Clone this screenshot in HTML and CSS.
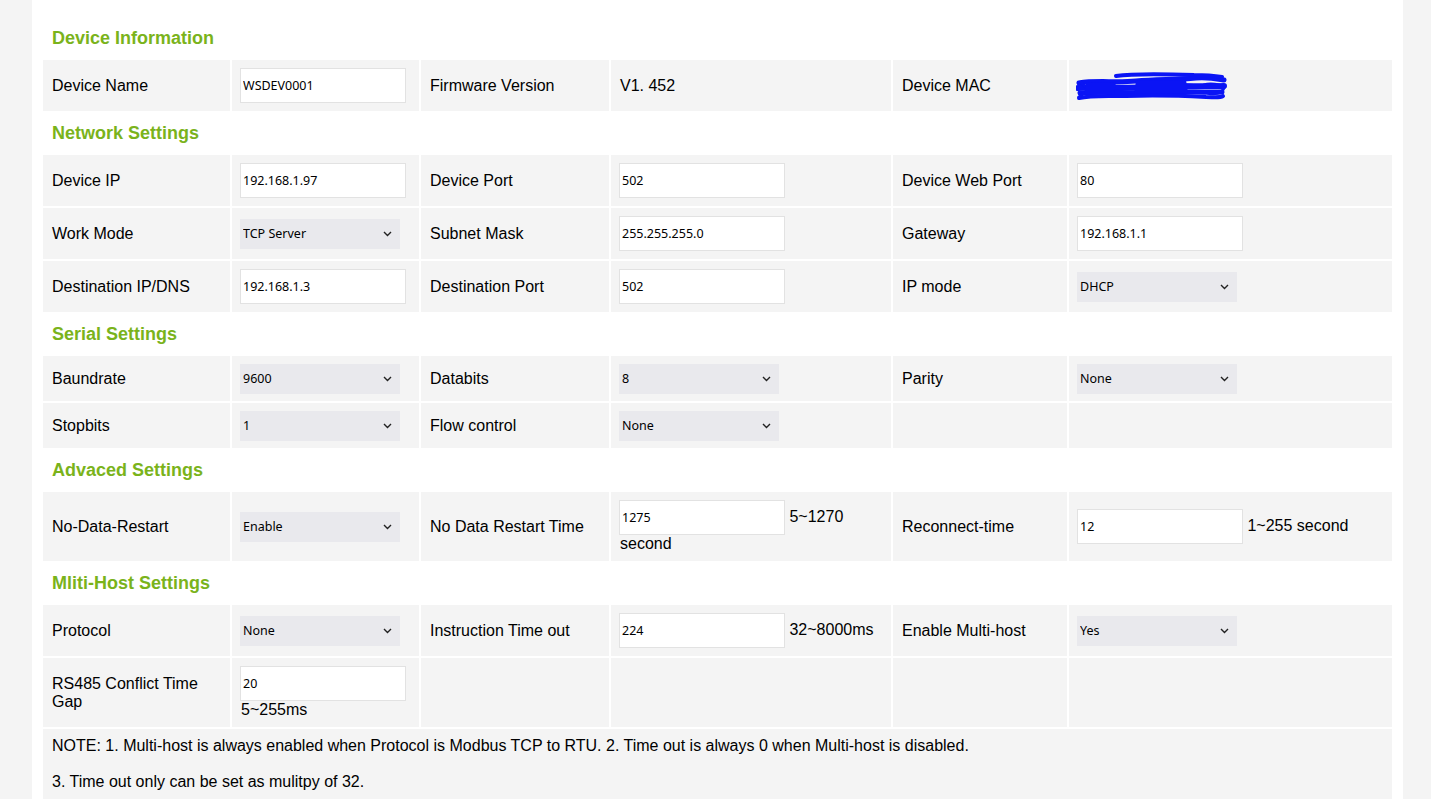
FILE: index.html
```html
<!DOCTYPE html>
<html>
<head>
<meta charset="utf-8">
<title>Device Settings</title>
<link rel="stylesheet" href="styles.css">
</head>
<body>
<div class="panel">
  <h3 class="sec">Device Information</h3>
  <table class="grid">
    <colgroup><col class="c1"><col class="c2"><col class="c3"><col class="c4"><col class="c5"><col class="c6"></colgroup>
    <tr class="r52">
      <td>Device Name</td>
      <td><input class="txt" type="text" value="WSDEV0001"></td>
      <td>Firmware Version</td>
      <td>V1. 452</td>
      <td>Device MAC</td>
      <td>
        <svg class="mac" width="152" height="30" viewBox="0 0 152 30">
          <g fill="none" stroke="#0a14f5" stroke-linecap="round" stroke-linejoin="round">
            <path d="M3 12 C20 9 40 12 60 10 C80 8 100 9 120 7 C132 6 142 8 148 9" stroke-width="5"/>
            <path d="M40 5 C60 2 90 3 118 4 C130 4 140 5 146 6" stroke-width="4"/>
            <path d="M2 17 C25 15 50 18 75 16 C100 14 125 16 148 15" stroke-width="6"/>
            <path d="M4 22 C30 20 60 23 90 21 C110 20 130 22 146 21" stroke-width="5"/>
            <path d="M3 27 C15 24 30 25 50 25 C80 24 110 25 130 26 C138 26 144 27 147 25" stroke-width="4"/>
            <path d="M5 11 L12 19 L3 26" stroke-width="3"/>
            <path d="M128 14 C134 12 144 13 148 17 C146 22 138 24 132 22" stroke-width="3"/>
          </g>
          <path d="M10 12 L40 11 L38 23 L8 24 Z M60 10 L110 9 L112 22 L58 23 Z" fill="#0a14f5"/>
        </svg>
      </td>
    </tr>
  </table>

  <h3 class="sec">Network Settings</h3>
  <table class="grid">
    <colgroup><col class="c1"><col class="c2"><col class="c3"><col class="c4"><col class="c5"><col class="c6"></colgroup>
    <tr class="r52">
      <td>Device IP</td>
      <td><input class="txt" type="text" value="192.168.1.97"></td>
      <td>Device Port</td>
      <td><input class="txt" type="text" value="502"></td>
      <td>Device Web Port</td>
      <td><input class="txt" type="text" value="80"></td>
    </tr>
    <tr class="r52">
      <td>Work Mode</td>
      <td><span class="sel"><select><option>TCP Server</option></select><svg class="chev" width="9" height="6" viewBox="0 0 9 6"><path d="M1 1 L4.5 4.5 L8 1" fill="none" stroke="#222" stroke-width="1.4"/></svg></span></td>
      <td>Subnet Mask</td>
      <td><input class="txt" type="text" value="255.255.255.0"></td>
      <td>Gateway</td>
      <td><input class="txt" type="text" value="192.168.1.1"></td>
    </tr>
    <tr class="r52">
      <td>Destination IP/DNS</td>
      <td><input class="txt" type="text" value="192.168.1.3"></td>
      <td>Destination Port</td>
      <td><input class="txt" type="text" value="502"></td>
      <td>IP mode</td>
      <td><span class="sel"><select><option>DHCP</option></select><svg class="chev" width="9" height="6" viewBox="0 0 9 6"><path d="M1 1 L4.5 4.5 L8 1" fill="none" stroke="#222" stroke-width="1.4"/></svg></span></td>
    </tr>
  </table>

  <h3 class="sec">Serial Settings</h3>
  <table class="grid">
    <colgroup><col class="c1"><col class="c2"><col class="c3"><col class="c4"><col class="c5"><col class="c6"></colgroup>
    <tr class="r46">
      <td>Baundrate</td>
      <td><span class="sel"><select><option>9600</option></select><svg class="chev" width="9" height="6" viewBox="0 0 9 6"><path d="M1 1 L4.5 4.5 L8 1" fill="none" stroke="#222" stroke-width="1.4"/></svg></span></td>
      <td>Databits</td>
      <td><span class="sel"><select><option>8</option></select><svg class="chev" width="9" height="6" viewBox="0 0 9 6"><path d="M1 1 L4.5 4.5 L8 1" fill="none" stroke="#222" stroke-width="1.4"/></svg></span></td>
      <td>Parity</td>
      <td><span class="sel"><select><option>None</option></select><svg class="chev" width="9" height="6" viewBox="0 0 9 6"><path d="M1 1 L4.5 4.5 L8 1" fill="none" stroke="#222" stroke-width="1.4"/></svg></span></td>
    </tr>
    <tr class="r46">
      <td>Stopbits</td>
      <td><span class="sel"><select><option>1</option></select><svg class="chev" width="9" height="6" viewBox="0 0 9 6"><path d="M1 1 L4.5 4.5 L8 1" fill="none" stroke="#222" stroke-width="1.4"/></svg></span></td>
      <td>Flow control</td>
      <td><span class="sel"><select><option>None</option></select><svg class="chev" width="9" height="6" viewBox="0 0 9 6"><path d="M1 1 L4.5 4.5 L8 1" fill="none" stroke="#222" stroke-width="1.4"/></svg></span></td>
      <td></td>
      <td></td>
    </tr>
  </table>

  <h3 class="sec">Advaced Settings</h3>
  <table class="grid">
    <colgroup><col class="c1"><col class="c2"><col class="c3"><col class="c4"><col class="c5"><col class="c6"></colgroup>
    <tr class="r70">
      <td>No-Data-Restart</td>
      <td><span class="sel"><select><option>Enable</option></select><svg class="chev" width="9" height="6" viewBox="0 0 9 6"><path d="M1 1 L4.5 4.5 L8 1" fill="none" stroke="#222" stroke-width="1.4"/></svg></span></td>
      <td>No Data Restart Time</td>
      <td><input class="txt" type="text" value="1275"> 5~1270 second</td>
      <td>Reconnect-time</td>
      <td><input class="txt" type="text" value="12"> 1~255 second</td>
    </tr>
  </table>

  <h3 class="sec">Mliti-Host Settings</h3>
  <table class="grid">
    <colgroup><col class="c1"><col class="c2"><col class="c3"><col class="c4"><col class="c5"><col class="c6"></colgroup>
    <tr class="r52">
      <td>Protocol</td>
      <td><span class="sel"><select><option>None</option></select><svg class="chev" width="9" height="6" viewBox="0 0 9 6"><path d="M1 1 L4.5 4.5 L8 1" fill="none" stroke="#222" stroke-width="1.4"/></svg></span></td>
      <td>Instruction Time out</td>
      <td><input class="txt" type="text" value="224"> 32~8000ms</td>
      <td>Enable Multi-host</td>
      <td><span class="sel"><select><option>Yes</option></select><svg class="chev" width="9" height="6" viewBox="0 0 9 6"><path d="M1 1 L4.5 4.5 L8 1" fill="none" stroke="#222" stroke-width="1.4"/></svg></span></td>
    </tr>
    <tr class="r70">
      <td>RS485 Conflict Time Gap</td>
      <td><input class="txt" type="text" value="20"> 5~255ms</td>
      <td></td>
      <td></td>
      <td></td>
      <td></td>
    </tr>
    <tr>
      <td class="note" colspan="6">NOTE: 1. Multi-host is always enabled when Protocol is Modbus TCP to RTU. 2. Time out is always 0 when Multi-host is disabled.<br><br>3. Time out only can be set as mulitpy of 32.</td>
    </tr>
  </table>
</div>
</body>
</html>
```

FILE: styles.css
```css
html, body {
  margin: 0;
  padding: 0;
}
body {
  background: #f4f4f4;
  font-family: "Liberation Sans", Arial, sans-serif;
  font-size: 16px;
  color: #000;
}
.panel {
  margin-left: 32px;
  width: 1353px;
  padding: 18px 9px 0 9px;
  background: #fff;
  min-height: 799px;
  box-sizing: content-box;
}
.sec {
  margin: 0 0 0 11px;
  height: 39px;
  padding-top: 1px;
  line-height: 39px;
  font-size: 18px;
  font-weight: bold;
  color: #7ab31b;
}
.grid {
  width: 1353px;
  table-layout: fixed;
  border-collapse: separate;
  border-spacing: 2px;
}
.c1 { width: 187px; }
.c2 { width: 187px; }
.c3 { width: 188px; }
.c4 { width: 280px; }
.c5 { width: 174px; }
.c6 { width: 323px; }
.grid td {
  background: #f4f4f4;
  padding: 0 8px 0 9px;
  vertical-align: middle;
  line-height: 18px;
  overflow: hidden;
}
.r52 { height: 51px; }
.r46 { height: 45px; }
.r70 { height: 69px; }
.txt {
  width: 166px;
  height: 35px;
  box-sizing: border-box;
  border: 1px solid #e2e2e2;
  background: #fff;
  padding: 0 2px;
  font-family: "Noto Sans", "Open Sans", sans-serif;
  font-size: 12.5px;
  color: #000;
  margin: 0 0 0 -1px;
  outline: none;
  vertical-align: middle;
}
.sel {
  position: relative;
  display: inline-block;
  width: 160px;
  height: 30px;
  margin-left: -1px;
  vertical-align: middle;
}
.sel select {
  -webkit-appearance: none;
  appearance: none;
  width: 160px;
  height: 30px;
  border: none;
  border-radius: 0;
  background: #e9e9ed;
  padding: 0 0 0 3px;
  font-family: "Noto Sans", "Open Sans", sans-serif;
  font-size: 12.5px;
  color: #000;
  outline: none;
}
.chev {
  position: absolute;
  right: 8px;
  top: 12px;
  pointer-events: none;
}
.mac {
  display: block;
  margin-left: -2px;
}
.note {
  padding-top: 8px !important;
  padding-bottom: 8px !important;
  height: auto;
}
```
